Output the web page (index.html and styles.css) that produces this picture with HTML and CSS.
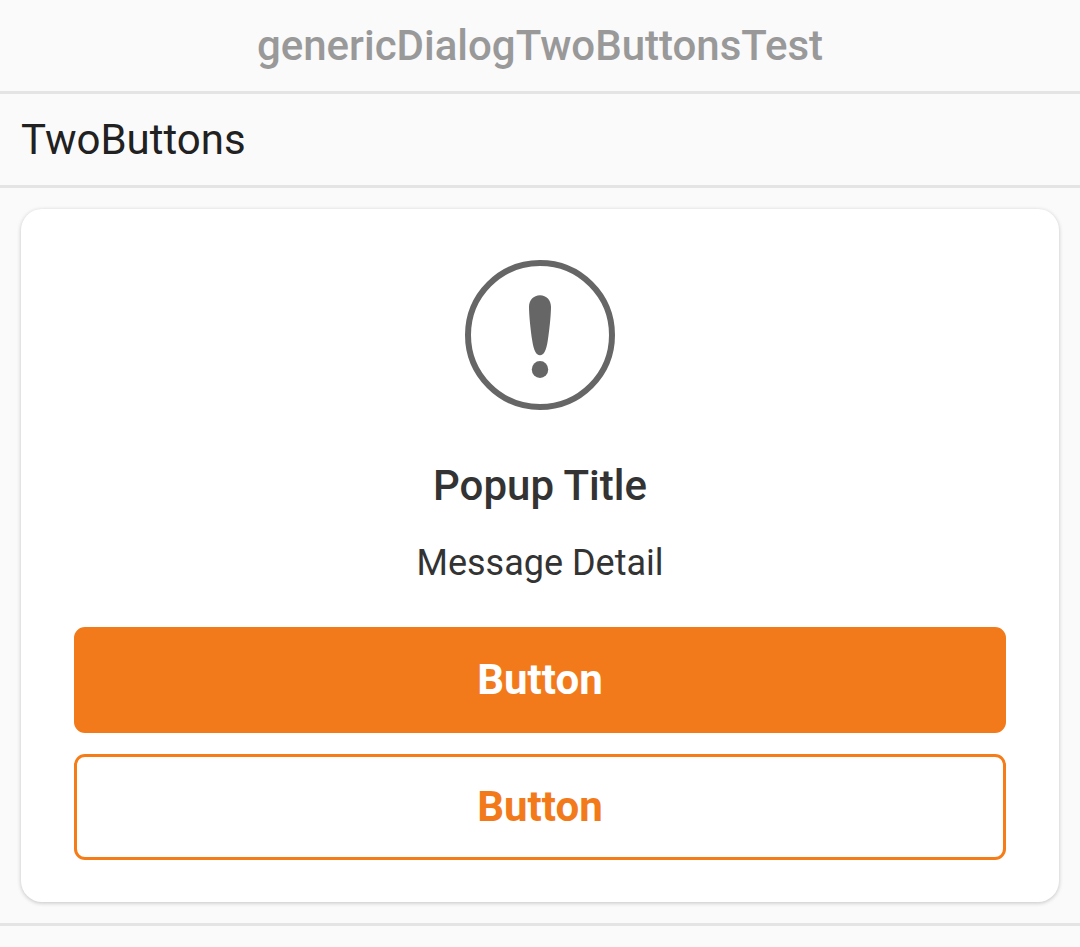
FILE: index.html
```
<!DOCTYPE html>
<html lang="en">
<head>
<meta charset="utf-8">
<meta name="viewport" content="width=device-width, initial-scale=1">
<title>genericDialogTwoButtonsTest</title>
<link rel="stylesheet" href="styles.css">
</head>
<body>
<header class="page-title"><h1>genericDialogTwoButtonsTest</h1></header>
<main>
<h2 class="section-title">TwoButtons</h2>
<section class="preview">
<div class="dialog" role="dialog" aria-labelledby="dialog-title" aria-describedby="dialog-message">
<svg class="dialog-icon" viewBox="0 0 150 150" aria-hidden="true">
<circle cx="75" cy="75" r="72" fill="none" stroke="currentColor" stroke-width="6"/>
<path fill="currentColor" d="M75 35.300C81.500 35.300 86 40.300 86 47C86 54 84.600 69 82.700 81C81.300 90 79 95.300 75 95.300S68.700 90 67.300 81C65.400 69 64 54 64 47C64 40.300 68.500 35.300 75 35.300Z"/>
<ellipse cx="75" cy="109.500" rx="8.200" ry="8.500" fill="currentColor"/>
</svg>
<h3 class="dialog-title" id="dialog-title">Popup Title</h3>
<p class="dialog-message" id="dialog-message">Message Detail</p>
<div class="actions">
<button class="button button-primary" type="button">Button</button>
<button class="button button-outline" type="button">Button</button>
</div>
</div>
</section>
</main>
</body>
</html>
```
FILE: styles.css
```
* {
  box-sizing: border-box;
}

body {
  margin: 0;
  background: #fafafa;
  color: #333;
  font-family: Roboto, sans-serif;
}

h1, h2, h3, p {
  margin: 0;
}

.page-title,
.section-title,
.preview {
  border-bottom: 3px solid #e4e4e4;
}

.page-title {
  padding: 21px;
  text-align: center;
}

.page-title h1 {
  color: #999;
  font-size: 42px;
  font-weight: 500;
  line-height: 49px;
}

.section-title {
  padding: 21px;
  color: #212121;
  font-size: 42px;
  font-weight: 400;
  line-height: 49px;
}

.preview {
  padding: 21px;
}

.dialog {
  display: flex;
  flex-direction: column;
  align-items: center;
  padding: 51px 53px 42px;
  border-radius: 21px;
  background: #fff;
  box-shadow: 0 1px 4px rgba(0, 0, 0, 0.22);
}

.dialog-icon {
  width: 150px;
  height: 150px;
  color: #666;
}

.dialog-title {
  margin-top: 51px;
  font-size: 42px;
  font-weight: 500;
  line-height: 49px;
}

.dialog-message {
  margin-top: 32px;
  font-size: 36px;
  line-height: 43px;
}

.actions {
  display: flex;
  flex-direction: column;
  gap: 21px;
  width: 100%;
  margin-top: 42px;
}

.button {
  width: 100%;
  padding: 25px 21px 26px;
  border: 3px solid #f27a1b;
  border-radius: 11px;
  font: 700 42px/49px Roboto, sans-serif;
}

.button-primary {
  background: #f27a1b;
  color: #fff;
}

.button-outline {
  border-color: #f57c17;
  background: #fff;
  color: #f27a1b;
}
```
